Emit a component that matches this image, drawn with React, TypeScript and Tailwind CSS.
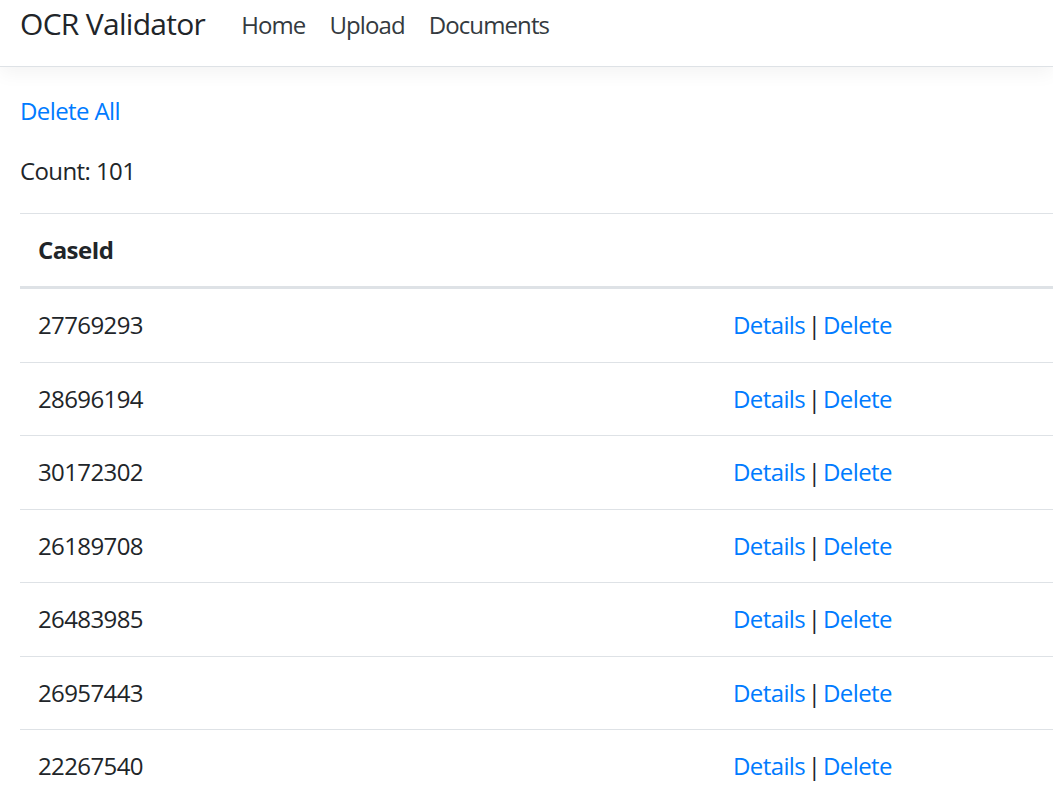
import React from "react";

const cases = [
  "27769293",
  "28696194",
  "30172302",
  "26189708",
  "26483985",
  "26957443",
  "22267540",
  "29013375",
];

const App: React.FC = () => {
  return (
    <div className="h-[798px] overflow-hidden bg-white text-[24px] leading-[36px] tracking-[-0.6px] text-[#212529] font-['Open_Sans',sans-serif]">
      <nav className="flex h-[67px] items-start border-b border-[#dee2e6] bg-white px-[20px] pt-[3px] shadow-[0_6px_18px_rgba(0,0,0,0.05)]">
        <span className="mr-[24px] text-[30px] leading-[42px] tracking-[-0.7px] text-[#212529]">
          OCR Validator
        </span>
        <ul className="flex pt-[4px]">
          {["Home", "Upload", "Documents"].map((item) => (
            <li key={item} className="px-[12px] tracking-[-0.9px] text-[#343a40]">
              {item}
            </li>
          ))}
        </ul>
      </nav>

      <main className="px-[20px] pt-[26px]">
        <p className="mb-[24px]">
          <a className="text-[#007bff] cursor-pointer">Delete All</a>
        </p>
        <p className="mb-[24px]">Count: 101</p>

        <table className="w-[1110px] border-collapse text-left">
          <thead>
            <tr>
              <th className="w-[695px] border-t border-b-[3px] border-[#dee2e6] px-[18px] py-[18px] font-bold">
                CaseId
              </th>
              <th className="border-t border-b-[3px] border-[#dee2e6] px-[18px] py-[18px]"></th>
            </tr>
          </thead>
          <tbody>
            {cases.map((id) => (
              <tr key={id}>
                <td className="border-t border-[#dee2e6] px-[18px] py-[18.25px]">
                  {id}
                </td>
                <td className="border-t border-[#dee2e6] px-[18px] py-[18.25px] [word-spacing:-3px]">
                  <a className="text-[#007bff] cursor-pointer">Details</a> |{" "}
                  <a className="text-[#007bff] cursor-pointer">Delete</a>
                </td>
              </tr>
            ))}
          </tbody>
        </table>
      </main>
    </div>
  );
};

export default App;
